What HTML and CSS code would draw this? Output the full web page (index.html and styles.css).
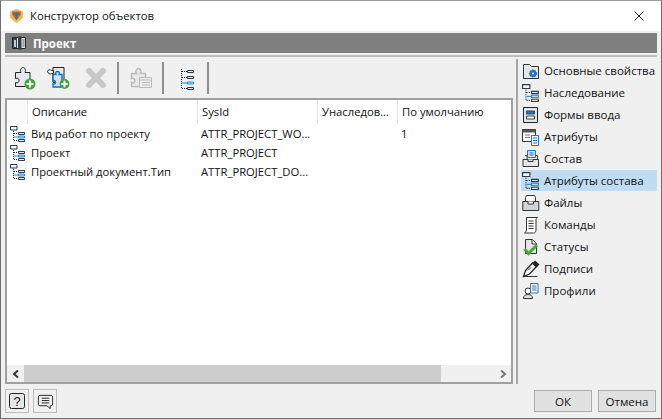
FILE: index.html
```html
<!DOCTYPE html>
<html lang="ru">
<head>
<meta charset="utf-8">
<title>Конструктор объектов</title>
<link rel="stylesheet" href="styles.css">
</head>
<body>
<svg class="defs" width="0" height="0">
  <symbol id="tree" viewBox="0 0 16 16">
    <path d="M.5 .5h6.500v3.500H.5z" fill="#f4f6f7" stroke="#2f3a45"/>
    <path d="M3.500 5v10M4 7.500h4M4 14.500h4" stroke="#222" stroke-dasharray="1 1" fill="none"/>
    <path d="M4 11h4" stroke="#1e88e5"/>
    <path d="M8.500 6.500h6v2h-6zM8.500 13.500h6v2h-6z" fill="#e8edf0" stroke="#2f3a45"/>
    <path d="M8.500 10h6v2h-6z" fill="#bfe3ff" stroke="#1e88e5"/>
  </symbol>
</svg>
<div class="window">
  <div class="titlebar">
    <svg class="app-icon" viewBox="0 0 18 18"><path d="M9 .8l7.500 3v7.400L9 17.200 1.500 11.200V3.800z" fill="#f3b73b" stroke="#c9c2a8"/><path d="M3.800 3.500h10.400v4L9 14 3.800 7.500z" fill="#e25a2a"/><path d="M5 5h8v2.200h-2.700v5.300H7.700V7.200H5z" fill="#1d7f95"/></svg>
    <span class="title-text">Конструктор объектов</span>
    <svg class="close" viewBox="0 0 10 10"><path d="M.5.5l9 9M9.500.5l-9 9" stroke="#222" fill="none"/></svg>
  </div>
  <div class="content">
    <div class="project-bar">
      <svg class="project-icon" viewBox="0 0 14 14"><path d="M.5 1.500h13v11H.5z" fill="#e3e8eb" stroke="#1f262b"/><path d="M1 2h4v10H1z" fill="#39434a"/><path d="M6 .5h3.500v13H6z" fill="#333c43"/><path d="M2 4h2v7H2z" fill="#c5ccd1"/><path d="M10.500 4h2M10.500 6h2M10.500 8h2M10.500 10h2" stroke="#555"/></svg>
      <span>Проект</span>
    </div>
    <div class="main">
      <div class="left">
        <div class="toolbar">
          <button class="tool"><svg viewBox="0 0 24 24" width="24" height="24"><path d="M3.500 6.500h5.500c-1.500-3 .5-5 2-5s3.500 2 2 5h5v14h-14.500v-4c2.500 1 3.500-.5 3.500-2s-1-3-3.500-2z" fill="#e3e9ee" stroke="#222"/><circle cx="18" cy="18" r="5.500" fill="#3fa535"/><path d="M18 14.500v7M14.500 18h7" stroke="#fff" stroke-width="2"/></svg></button>
          <button class="tool narrow"><svg viewBox="0 0 24 24" width="24" height="24"><path d="M7 1.500h11v15H7z" fill="#e3e9ee" stroke="#222"/><path d="M1.500 5.500c0-2 3-2 4-1h2v3h-2c-1 1-4 0-4-2z" fill="#fff" stroke="#222"/><path d="M7 8.500h3c-1-2 0-3 1.500-3s2.500 1 1.500 3h3v12.500H7v-3c2 .5 2.500-.5 2.500-1.500S9 14 7 14.500z" fill="#cfe4f7" stroke="#0f6fb8" stroke-width="1.400"/><circle cx="18.500" cy="18" r="5" fill="#3fa535"/><path d="M18.500 14.800v6.400M15.300 18h6.400" stroke="#fff" stroke-width="2"/></svg></button>
          <button class="tool wide"><svg viewBox="0 0 24 24" width="24" height="24"><path d="M5 5l14 14M19 5L5 19" stroke="#c8c8c8" stroke-width="6" stroke-linecap="round" fill="none"/></svg></button>
          <i class="sep"></i>
          <button class="tool wide"><svg viewBox="0 0 24 24" width="24" height="24"><path d="M2.500 7.500h5c-1.500-3 .5-5 2-5s3.500 2 2 5h5v13h-14v-4c2 1 3.500-.5 3.500-2s-1.500-3-3.500-2z" fill="#e8e8e8" stroke="#bbb" stroke-width="1.500"/><path d="M10.500 11.500h12v10h-12z" fill="#eee" stroke="#bbb"/><path d="M10.500 14h12M13 16.500h8M13 19h8" stroke="#bbb"/></svg></button>
          <i class="sep"></i>
          <button class="tool wide"><svg viewBox="0 0 24 24" width="24" height="24"><path d="M7.500 3v20M8 5.500h5M8 11.500h5M8 22.500h5" stroke="#222" stroke-dasharray="1 1" fill="none"/><path d="M13.500 4.500h6v2h-6zM13.500 10.500h6v2h-6zM13.500 21.500h6v2h-6z" fill="#e8edf0" stroke="#2f3a45"/><path d="M8 17h5" stroke="#1e88e5"/><path d="M13.500 16h6v2h-6z" fill="#bfe3ff" stroke="#1e88e5"/></svg></button>
          <i class="sep"></i>
        </div>
        <div class="table-box">
          <div class="table-scroll">
            <div class="head">
              <span class="gutter"></span>
              <span class="c1">Описание</span>
              <span class="c2">SysId</span>
              <span class="c3">Унаследов...</span>
              <span class="c4">По умолчанию</span>
            </div>
            <div class="row"><svg class="ri"><use href="#tree"/></svg><span class="c1">Вид работ по проекту</span><span class="c2">ATTR_PROJECT_WO...</span><span class="c3"></span><span class="c4">1</span></div>
            <div class="row"><svg class="ri"><use href="#tree"/></svg><span class="c1">Проект</span><span class="c2">ATTR_PROJECT</span><span class="c3"></span><span class="c4"></span></div>
            <div class="row"><svg class="ri"><use href="#tree"/></svg><span class="c1">Проектный документ.Тип</span><span class="c2">ATTR_PROJECT_DO...</span><span class="c3"></span><span class="c4"></span></div>
          </div>
          <div class="hscroll">
            <span class="arrow"><svg viewBox="0 0 8 8" width="8" height="8"><path d="M6 .5L2 4l4 3.500" fill="none" stroke="#333" stroke-width="2"/></svg></span>
            <span class="thumb"></span>
            <span class="arrow"><svg viewBox="0 0 8 8" width="8" height="8"><path d="M2 .5L6 4 2 7.500" fill="none" stroke="#777" stroke-width="2"/></svg></span>
          </div>
        </div>
      </div>
      <i class="divider"></i>
      <ul class="side">
        <li><svg class="si" viewBox="0 0 18 18"><path d="M1.500 4.500v-2h6l2 2h7v12h-15z" fill="#e3e7ea" stroke="#333"/><circle cx="11" cy="11.500" r="3.500" fill="#1e77c4" stroke="#0e5a9a" stroke-dasharray="1.500 1"/><circle cx="11" cy="11.500" r="1" fill="#fff"/></svg>Основные свойства</li>
        <li><svg class="si"><use href="#tree"/></svg>Наследование</li>
        <li><svg class="si" viewBox="0 0 18 18"><path d="M1.500 1.500h14v15h-14z" fill="#e3e7ea" stroke="#222"/><path d="M4.500 5h8v3h-8z" fill="#1e77c4" stroke="#3a444c"/><path d="M4.500 10h8v3h-8z" fill="#fff" stroke="#3a444c"/></svg>Формы ввода</li>
        <li><svg class="si" viewBox="0 0 18 18"><path d="M.5 1.500h13v12H.5z" fill="#fff" stroke="#333"/><path d="M.5 1.500h13v3H.5z" fill="#555"/><path d="M3 7h5M3 9.500h5" stroke="#777"/><path d="M9.500 7.500h7v10h-7z" fill="#fff" stroke="#1e77c4"/><path d="M11 10h4M11 12.500h4M11 15h4" stroke="#1e77c4"/></svg>Атрибуты</li>
        <li><svg class="si" viewBox="0 0 18 18"><path d="M5.500 .5h8v7h-8z" fill="#cfe4f7" stroke="#1e77c4"/><path d="M7.500 3h4M7.500 5h4" stroke="#1e77c4"/><path d="M3 5.500h2v4M15.500 9.500v-4h-2" fill="none" stroke="#444"/><path d="M1 9.500h15.500v7H1z" fill="#e4e6e8" stroke="#333"/><path d="M6 9.500v2h5v-2" fill="#fff" stroke="#333"/></svg>Состав</li>
        <li class="active"><svg class="si"><use href="#tree"/></svg>Атрибуты состава</li>
        <li><svg class="si" viewBox="0 0 18 18"><path d="M4.500 1.500h8l1 2v5h-10v-5z" fill="#fff" stroke="#333"/><path d="M.8 7.500h16v9h-16z" fill="#cfd5da" stroke="#333"/><path d="M6 7.500v2.500h5.500V7.500" fill="#fff" stroke="#333"/></svg>Файлы</li>
        <li><svg class="si" viewBox="0 0 18 18"><path d="M4.500 1.500h11c-1 .5-1.500 1-1.500 2v10.500c0 2-1 3-2.500 3h-9c1-.5 2-1.500 2-3z" fill="#fff" stroke="#333"/><path d="M6.500 5h5M6.500 7.500h5M6.500 10h5M6.500 12.500h5" stroke="#333"/></svg>Команды</li>
        <li><svg class="si" viewBox="0 0 18 18"><path d="M3.500 1.500h7l4 4v10h-11z" fill="#e3e7ea" stroke="#333"/><path d="M10 1.500v4.500h4.500" fill="#fff" stroke="#333"/><path d="M2.500 11l4 4.500 8.500-8.500" stroke="#49a83a" stroke-width="3" fill="none"/></svg>Статусы</li>
        <li><svg class="si" viewBox="0 0 18 18"><path d="M1.500 16.500l2-6 7-7.500 4 3.500-7 7.500z" fill="#fff" stroke="#222" stroke-width="1.300"/><path d="M10 3.500l3-3 4.500 4-3 3z" fill="#222"/><path d="M1.500 16.500h14" stroke="#333"/><path d="M6 10.500l3-3" stroke="#222"/></svg>Подписи</li>
        <li><svg class="si" viewBox="0 0 18 18"><circle cx="6" cy="9" r="3" fill="#fff" stroke="#333"/><path d="M1.500 16.500c0-3 2-4 4.500-4s4.500 1 4.500 4z" fill="#dfe3e6" stroke="#333"/><path d="M8.500 1.500h7.500v9.500H8.500z" fill="#fff" stroke="#1e77c4"/><path d="M10 4h4.500M10 6h4.500M10 8h4.500" stroke="#1e77c4"/></svg>Профили</li>
      </ul>
    </div>
    <div class="footer">
      <div class="foot-left">
        <button class="sq"><svg viewBox="0 0 16 16" width="16" height="16"><rect x=".5" y=".5" width="15" height="15" rx="2" fill="#e3e7ea" stroke="#222"/></svg><b>?</b></button>
        <button class="sq"><svg viewBox="0 0 18 18" width="17" height="17"><path d="M3 2.500h12c1 0 1.500.5 1.500 1.500v8c0 1-.5 1.500-1.500 1.500h-1v3l-3.500-3H3c-1 0-1.500-.5-1.500-1.500V4c0-1 .5-1.500 1.500-1.500z" fill="#eef0f2" stroke="#222"/><path d="M5 5.500h8M5 8h8M5 10.500h8" stroke="#222"/></svg></button>
      </div>
      <div class="foot-right">
        <button class="btn">ОК</button>
        <button class="btn">Отмена</button>
      </div>
    </div>
  </div>
</div>
</body>
</html>
```
FILE: styles.css
```css
* { box-sizing: border-box; }
html, body { margin: 0; padding: 0; height: 100%; }
body { overflow: hidden; font-family: "Open Sans", "Noto Sans", sans-serif; font-size: 11.25px; color: #111; }
.defs { position: absolute; }
.window { width: 662px; height: 419px; border: 1px solid #6e6e6e; border-top-color: #9a9a9a; background: #f0f0f0; display: flex; flex-direction: column; }
.titlebar { height: 30px; background: #fff; display: flex; align-items: center; padding: 0 0 1px 8px; flex: none; }
.app-icon { width: 15px; height: 16px; margin-right: 6px; }
.title-text { font-size: 11.3px; flex: 1; padding-bottom: 1px; }
.close { width: 10px; height: 10px; margin-right: 17px; }
.content { flex: 1; display: flex; flex-direction: column; padding: 2px 4px 0; min-height: 0; }
.project-bar { height: 20px; background: #7f7f7f; color: #fff; font-weight: 700; font-size: 11.5px; display: flex; align-items: center; padding-left: 7px; gap: 7px; flex: none; }
.project-icon { width: 14px; height: 14px; }
.main { flex: 1; display: flex; min-height: 0; margin-top: 2px; border-top: 2px solid #bcbcbc; }
.left { width: 508px; display: flex; flex-direction: column; flex: none; }
.toolbar { height: 41px; display: flex; align-items: center; padding-left: 2px; flex: none; }
.tool { width: 34px; height: 30px; border: 0; background: none; padding: 0; display: flex; align-items: center; justify-content: center; flex: none; }
.tool.narrow { width: 33px; }
.tool.wide { width: 43px; }
.tool svg { display: block; flex: none; }
.sep { width: 2px; height: 32px; background: #8f8f8f; flex: none; }
.table-box { flex: 1; border: 2px solid #a0a0a0; background: #fff; display: flex; flex-direction: column; min-height: 0; }
.table-scroll { flex: 1; min-height: 0; }
.head { height: 24px; display: flex; align-items: center; background: #fff; }
.gutter { width: 21px; height: 100%; background: #fafafa; border-right: 1px solid #e6e6e6; flex: none; }
.head span { height: 100%; display: flex; align-items: center; border-right: 1px solid #e6e6e6; padding-bottom: 2px; }
.c1, .c2, .c3, .c4 { flex: none; white-space: nowrap; overflow: hidden; }
.head .c1, .head .c2 { padding-left: 4px; }
.head .c1 { width: 170px; }
.head .c2 { width: 120px; }
.head .c3 { width: 80px; padding-left: 4px; }
.head .c4 { width: 100px; padding-left: 4px; border-right: 0; }
.row { height: 19px; display: flex; align-items: center; }
.ri { width: 16px; height: 16px; margin: 0 5px 0 3px; flex: none; }
.row .c1 { width: 170px; }
.row .c2 { width: 120px; }
.row .c3 { width: 80px; }
.row .c4 { width: 100px; }
.hscroll { height: 17px; background: #f0f0f0; display: flex; align-items: center; justify-content: space-between; flex: none; }
.arrow { width: 17px; display: flex; justify-content: center; flex: none; }
.thumb { width: 417px; height: 17px; background: #cdcdcd; margin-right: auto; }
.divider { width: 2px; margin: 2px 0 0 3px; background: #a6a6a6; flex: none; }
.side { list-style: none; margin: 3px 0 0 3px; padding: 0; flex: 1; min-width: 0; font-size: 11.5px; }
.side li { height: 21px; margin-bottom: 1px; display: flex; align-items: center; gap: 4px; padding-left: 1px; white-space: nowrap; }
.side li.active { background: #bfdcf2; }
.si { width: 18px; height: 18px; flex: none; }
.footer { height: 34px; display: flex; justify-content: space-between; align-items: center; flex: none; }
.foot-left { display: flex; gap: 4px; }
.sq { width: 24px; height: 24px; padding: 0; background: #f0f0f0; border: 1px solid #bdbdbd; display: flex; align-items: center; justify-content: center; position: relative; }
.sq b { position: absolute; font-family: "Liberation Sans", sans-serif; font-weight: 400; font-size: 13px; color: #222; }
.foot-right { display: flex; gap: 6px; margin-right: 1px; }
.btn { width: 58px; height: 22px; padding: 0; background: #e1e1e1; border: 1px solid #adadad; font: 11.5px "Open Sans", "Noto Sans", sans-serif; color: #111; }
```
